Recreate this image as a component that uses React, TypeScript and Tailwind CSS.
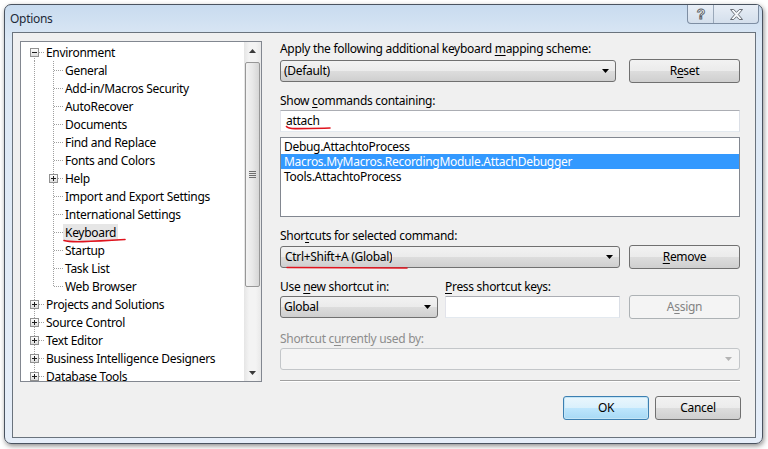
import React from "react";

type Cell = "rootFirst" | "root" | "pass" | "child" | "childLast";

type Row = {
  label: string;
  cells: Cell[];
  box?: "plus" | "minus";
  selected?: boolean;
};

const rows: Row[] = [
  { label: "Environment", cells: ["rootFirst"], box: "minus" },
  { label: "General", cells: ["pass", "child"] },
  { label: "Add-in/Macros Security", cells: ["pass", "child"] },
  { label: "AutoRecover", cells: ["pass", "child"] },
  { label: "Documents", cells: ["pass", "child"] },
  { label: "Find and Replace", cells: ["pass", "child"] },
  { label: "Fonts and Colors", cells: ["pass", "child"] },
  { label: "Help", cells: ["pass", "child"], box: "plus" },
  { label: "Import and Export Settings", cells: ["pass", "child"] },
  { label: "International Settings", cells: ["pass", "child"] },
  { label: "Keyboard", cells: ["pass", "child"], selected: true },
  { label: "Startup", cells: ["pass", "child"] },
  { label: "Task List", cells: ["pass", "child"] },
  { label: "Web Browser", cells: ["pass", "childLast"] },
  { label: "Projects and Solutions", cells: ["root"], box: "plus" },
  { label: "Source Control", cells: ["root"], box: "plus" },
  { label: "Text Editor", cells: ["root"], box: "plus" },
  { label: "Business Intelligence Designers", cells: ["root"], box: "plus" },
  { label: "Database Tools", cells: ["root"], box: "plus" },
];

function TreeCell({ kind, box, isLast }: { kind: Cell; box?: "plus" | "minus"; isLast: boolean }) {
  const dot = { stroke: "#a0a0a0", strokeWidth: 1, strokeDasharray: "1 1" };
  let y1 = 0;
  let y2 = 18;
  if (kind === "rootFirst") y1 = 9;
  if (kind === "childLast") y2 = 10;
  const showHoriz = isLast;
  return (
    <svg width="19" height="18" className="shrink-0">
      <line x1="9.5" y1={y1} x2="9.5" y2={y2} style={dot} />
      {showHoriz && <line x1={box ? 14 : 10} y1="9.5" x2="19" y2="9.5" style={dot} />}
      {showHoriz && box && (
        <g>
          <defs>
            <linearGradient id="bx" x1="0" y1="0" x2="0" y2="1">
              <stop offset="0" stopColor="#ffffff" />
              <stop offset="1" stopColor="#dcdcdc" />
            </linearGradient>
          </defs>
          <rect x="5.5" y="5.5" width="8" height="8" fill="url(#bx)" stroke="#919191" />
          <line x1="7" y1="9.5" x2="12" y2="9.5" stroke="#1e1e1e" />
          {box === "plus" && <line x1="9.5" y1="7" x2="9.5" y2="12" stroke="#1e1e1e" />}
        </g>
      )}
    </svg>
  );
}

function Arrow({ color = "#000" }: { color?: string }) {
  return (
    <svg width="7" height="4" className="shrink-0">
      <path d="M0 0h7L3.5 4z" fill={color} />
    </svg>
  );
}

function Combo({
  children,
  className,
  disabled,
}: {
  children?: React.ReactNode;
  className: string;
  disabled?: boolean;
}) {
  return (
    <div
      className={
        disabled
          ? `flex h-[22px] items-center justify-between rounded-[3px] border border-[#c3c6c9] bg-[#f4f4f4] pl-[4px] pr-[7px] ${className}`
          : `flex h-[22px] items-center justify-between rounded-[3px] border border-[#707070] bg-[linear-gradient(to_bottom,#f2f2f2_0%,#ebebeb_50%,#dddddd_50%,#cfcfcf_100%)] pl-[3px] pr-[6px] ${className}`
      }
    >
      <span className="truncate">{children}</span>
      <Arrow color={disabled ? "#b4b4b4" : "#000"} />
    </div>
  );
}

function Btn({
  children,
  className,
  disabled,
  primary,
}: {
  children: React.ReactNode;
  className: string;
  disabled?: boolean;
  primary?: boolean;
}) {
  let look =
    "border-[#707070] bg-[linear-gradient(to_bottom,#f2f2f2_0%,#ebebeb_50%,#dddddd_50%,#cfcfcf_100%)] text-black";
  if (disabled) look = "border-[#adb2b5] bg-[#f4f4f4] text-[#838383]";
  if (primary)
    look =
      "border-[#3c7fb1] bg-[linear-gradient(to_bottom,#eaf6fd_0%,#d9f0fc_50%,#bee6fd_50%,#a7d9f5_100%)] text-black shadow-[inset_0_0_0_1px_#c4e5f6]";
  return (
    <div className={`flex items-center justify-center rounded-[3px] border ${look} ${className}`}>
      {children}
    </div>
  );
}

function U({ children }: { children: React.ReactNode }) {
  return <span className="underline decoration-1 underline-offset-[2px]">{children}</span>;
}

function RedMark({ className, d, w, h }: { className: string; d: string; w: number; h: number }) {
  return (
    <svg width={w} height={h} className={`pointer-events-none absolute ${className}`}>
      <path d={d} fill="none" stroke="#e0141e" strokeWidth="1.6" strokeLinecap="round" />
    </svg>
  );
}

function Tree() {
  return (
    <div className="flex h-[341px] w-[242px] border border-[#828790] bg-white">
      <div className="flex-1 overflow-hidden pl-[4px] pt-[1px]">
        {rows.map((r) => (
          <div key={r.label} className="flex h-[18px] items-center">
            {r.cells.map((c, i) => (
              <TreeCell key={i} kind={c} box={r.box} isLast={i === r.cells.length - 1} />
            ))}
            <span
              className={`relative whitespace-nowrap px-[2px] leading-[17px] ${r.selected ? "bg-[#e6e6e6]" : ""}`}
            >
              {r.label}
              {r.selected && (
                <RedMark className="left-[0px] top-[13px]" w={64} h={6} d="M1 3.5 Q6 5 20 4.6 T62 2.5" />
              )}
            </span>
          </div>
        ))}
      </div>
      <div className="flex w-[17px] flex-col bg-[linear-gradient(to_right,#e5e5e5,#f3f3f3_30%,#f3f3f3_70%,#e8e8e8)]">
        <div className="flex h-[17px] items-center justify-center">
          <svg width="7" height="4">
            <path d="M3.5 0L7 4H0z" fill="#3a3a3a" />
          </svg>
        </div>
        <div className="mx-[1px] mt-[3px] flex h-[225px] items-center justify-center rounded-[2px] border border-[#979797] bg-[linear-gradient(to_right,#f3f3f3,#e8e8e8_50%,#d6d6d6)]">
          <div className="flex flex-col gap-[1px]">
            <div className="h-[1px] w-[7px] bg-[#6f6f6f]" />
            <div className="h-[1px] w-[7px] bg-[#6f6f6f]" />
            <div className="h-[1px] w-[7px] bg-[#6f6f6f]" />
            <div className="h-[1px] w-[7px] bg-[#6f6f6f]" />
          </div>
        </div>
        <div className="flex-1" />
        <div className="flex h-[17px] items-center justify-center">
          <svg width="7" height="4">
            <path d="M0 0h7L3.5 4z" fill="#3a3a3a" />
          </svg>
        </div>
      </div>
    </div>
  );
}

function RightPanel() {
  return (
    <div className="ml-[18px] flex w-[461px] flex-col">
      <div className="h-[15px] leading-[15px]">
        Apply the following additional keyboard <U>m</U>apping scheme:
      </div>
      <div className="mt-[3px] flex h-[24px] items-center">
        <Combo className="w-[336px]">(Default)</Combo>
        <Btn className="ml-[13px] h-[24px] w-[111px]">
          R<U>e</U>set
        </Btn>
      </div>
      <div className="mt-[10px] h-[15px] leading-[15px]">
        Show <U>c</U>ommands containing:
      </div>
      <div className="relative mt-[2px] flex h-[22px] w-[460px] items-center border border-[#abadb3] border-b-[#e3e9ef] border-l-[#e2e3ea] border-r-[#dbdfe6] bg-white pl-[5px]">
        attach
        <RedMark className="left-[4px] top-[14px]" w={48} h={6} d="M1.5 1.5 Q3 3.5 10 3.6 T45 3" />
      </div>
      <div className="mt-[5px] h-[80px] w-[460px] border border-[#828790] bg-white pt-[1px]">
        <div className="h-[15px] pl-[3px] leading-[15px]">Debug.AttachtoProcess</div>
        <div className="h-[15px] bg-[#3399ff] pl-[3px] leading-[15px] text-white">
          Macros.MyMacros.RecordingModule.AttachDebugger
        </div>
        <div className="h-[15px] pl-[3px] leading-[15px]">Tools.AttachtoProcess</div>
      </div>
      <div className="mt-[11px] h-[15px] leading-[15px]">
        Shor<U>t</U>cuts for selected command:
      </div>
      <div className="mt-[2px] flex h-[24px] items-center">
        <div className="relative">
          <Combo className="w-[340px] pl-[4px]">Ctrl+Shift+A (Global)</Combo>
          <RedMark className="left-[6px] top-[20px]" w={124} h={4} d="M1 1.5 L121 2" />
        </div>
        <Btn className="ml-[9px] h-[24px] w-[111px]">
          <U>R</U>emove
        </Btn>
      </div>
      <div className="mt-[10px] flex h-[15px] leading-[15px]">
        <div className="w-[165px]">
          Use <U>n</U>ew shortcut in:
        </div>
        <div>
          <U>P</U>ress shortcut keys:
        </div>
      </div>
      <div className="mt-[1px] flex h-[24px] items-center">
        <Combo className="w-[158px]">Global</Combo>
        <div className="ml-[7px] h-[22px] w-[175px] border border-[#abadb3] border-b-[#e3e9ef] border-l-[#e2e3ea] border-r-[#dbdfe6] bg-white" />
        <Btn disabled className="ml-[9px] h-[24px] w-[111px]">
          A<U>s</U>sign
        </Btn>
      </div>
      <div className="mt-[12px] h-[15px] leading-[15px] text-[#8d8d8d]">
        Shortcut c<U>u</U>rrently used by:
      </div>
      <div className="mt-[2px]">
        <Combo disabled className="w-[460px]" />
      </div>
      <div className="mt-[10px] h-[1px] w-[460px] bg-[#a0a0a0] shadow-[0_1px_0_#ffffff]" />
      <div className="mt-[15px] flex h-[24px] justify-end">
        <Btn primary className="h-[24px] w-[86px]">
          OK
        </Btn>
        <Btn className="ml-[6px] h-[24px] w-[86px]">Cancel</Btn>
      </div>
    </div>
  );
}

function CaptionButtons() {
  return (
    <div className="mr-[3px] flex h-[19px] self-start overflow-hidden rounded-b-[4px] border border-t-0 border-[#7e8ea3] bg-[linear-gradient(to_bottom,#e8eef6,#d4dfec)]">
      <div className="flex w-[26px] items-center justify-center border-r border-[#9aa8b9]">
        <svg width="12" height="14">
          <text
            x="6"
            y="12"
            textAnchor="middle"
            fontSize="14"
            fontWeight="bold"
            fontFamily="Liberation Sans, sans-serif"
            fill="#f6f8fb"
            stroke="#5a5f66"
            strokeWidth="0.9"
          >
            ?
          </text>
        </svg>
      </div>
      <div className="flex w-[44px] items-center justify-center">
        <svg width="13" height="11">
          <path
            d="M0.5 0.5h3.2l2.8 2.8 2.8-2.8h3.2l-4.2 5 4.2 5h-3.2l-2.8-2.8-2.8 2.8h-3.2l4.2-5z"
            fill="#f6f8fb"
            stroke="#5a5f66"
            strokeWidth="0.9"
          />
        </svg>
      </div>
    </div>
  );
}

export default function App() {
  return (
    <div className="h-[449px] w-[768px] overflow-hidden bg-white pl-[4px] pt-[4px] font-['Noto_Sans',sans-serif] text-[12px] tracking-[-0.3px] text-black">
      <div className="flex h-[440px] w-[759px] flex-col rounded-[7px] border border-[#4a5360] bg-[linear-gradient(to_bottom,#c8dbef_0%,#dce8f5_8%,#e1ebf7_60%,#e6eef9_100%)] shadow-[1px_2px_5px_rgba(0,0,0,0.45)]">
        <div className="flex h-[27px] items-start">
          <div className="ml-[5px] mt-[6px] flex-1 text-[12px] leading-[16px] text-[#1e2a38]">Options</div>
          <CaptionButtons />
        </div>
        <div className="ml-[7px] flex h-[406px] w-[744px] items-start border border-[#6a737d] bg-[#f0f0f0] pl-[7px] pt-[8px]">
          <Tree />
          <RightPanel />
        </div>
      </div>
    </div>
  );
}
